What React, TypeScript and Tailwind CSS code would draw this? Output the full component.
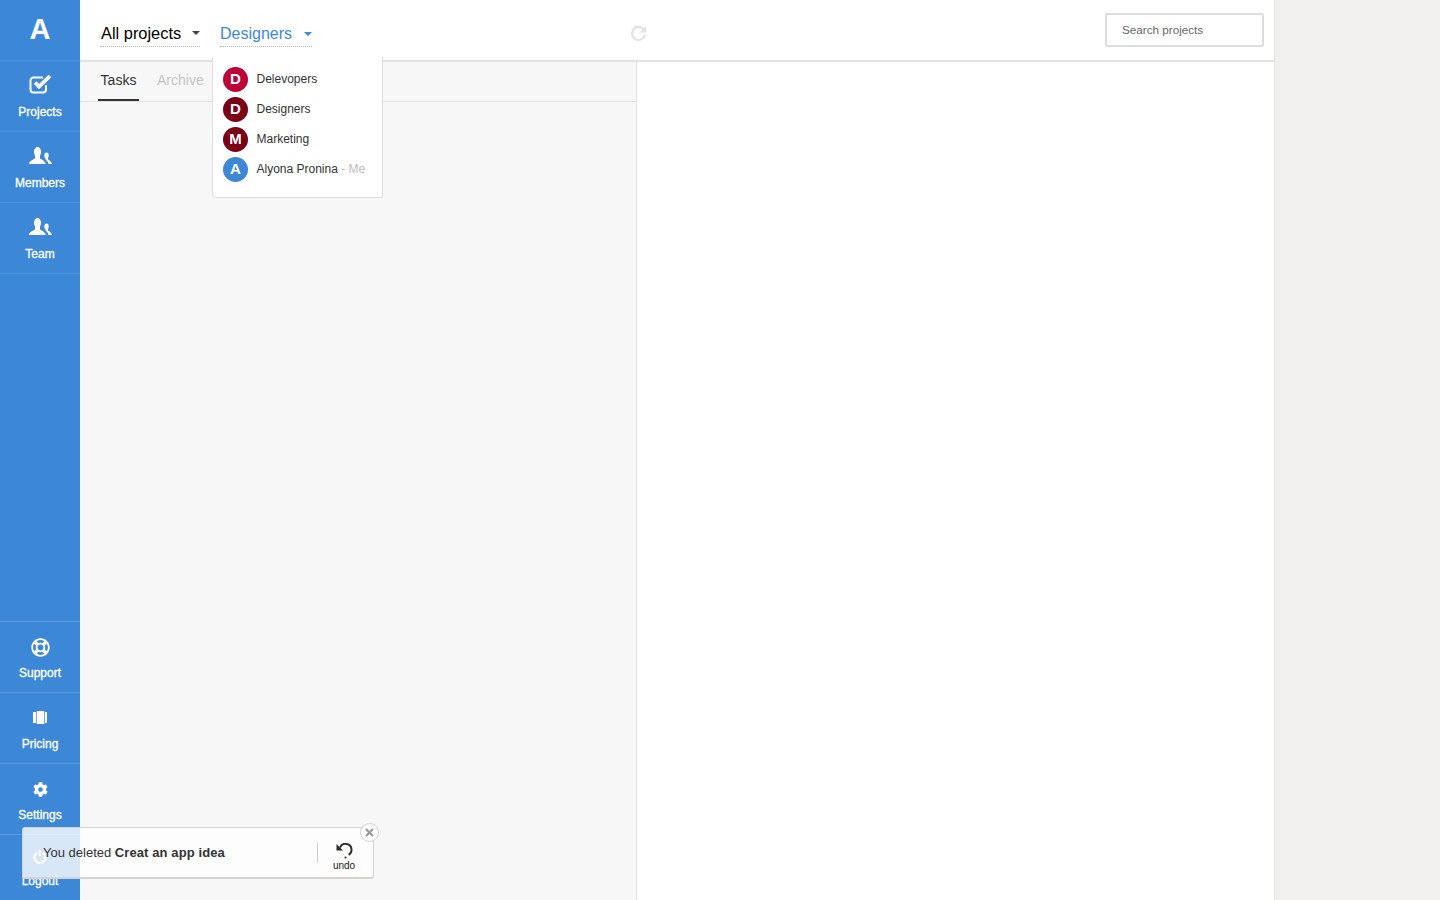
import type { ReactNode } from "react";
import { FaCog, FaRegLifeRing } from "react-icons/fa";

const groups = [
  { letter: "D", name: "Delevopers", color: "bg-[#bd0038]" },
  { letter: "D", name: "Designers", color: "bg-[#7a0018]" },
  { letter: "M", name: "Marketing", color: "bg-[#7a0018]" },
  { letter: "A", name: "Alyona Pronina", color: "bg-[#3d88d6]", me: true },
];

function CheckIcon() {
  return (
    <svg width="23" height="20" viewBox="0 0 23 20" fill="none" className="-mt-[3px]">
      <path d="M17 11v4.500a3 3 0 0 1-3 3H4.500a3 3 0 0 1-3-3V6.500a3 3 0 0 1 3-3H14" stroke="white" strokeWidth="2" />
      <path d="M6 8.500 10 12.500 21 2" stroke="white" strokeWidth="3.800" />
    </svg>
  );
}

function PeopleIcon() {
  return (
    <svg width="23" height="17" viewBox="0 0 23 17" fill="white" className="-mt-[3px]">
      <ellipse cx="8.500" cy="5" rx="3.500" ry="5" />
      <path d="M0 17C0 14.500 3 13 6 11.500V8h5v3.500c3 1.500 5.500 3 5.700 5.500Z" />
      <ellipse cx="17.500" cy="8.500" rx="2.200" ry="3" />
      <path d="M16.500 10.500H19v2c2 1 3.500 2.500 4 4.500h-3.500c-.4-2-1.300-3.300-3-4.500Z" />
    </svg>
  );
}

function PricingIcon() {
  return (
    <svg width="14" height="13" viewBox="0 0 14 13" fill="white">
      <rect x="0" y="1" width="3" height="11" />
      <rect x="3.700" y="0" width="7.600" height="13" />
      <rect x="12" y="1" width="2" height="11" />
    </svg>
  );
}

function PowerIcon() {
  return (
    <svg width="14" height="14" viewBox="0 0 14 14" fill="none" stroke="white" strokeWidth="2.200">
      <path d="M4 2.800a5.500 5.500 0 1 0 6 0" />
      <path d="M7 0v6" />
    </svg>
  );
}

function UndoIcon() {
  return (
    <svg width="17" height="16" viewBox="0 0 17 16" fill="none" className="shrink-0">
      <path d="M4 4.500A6 6 0 0 1 15.500 7c0 2.300-1 3.800-2.800 4.800" stroke="#2f2f2f" strokeWidth="2" />
      <path d="M.5 1v6.500H7Z" fill="#2f2f2f" />
      <circle cx="9.500" cy="14.500" r="1.100" fill="#2f2f2f" />
    </svg>
  );
}

function RefreshIcon() {
  return (
    <svg width="17" height="17" viewBox="0 0 17 17" fill="none">
      <path d="M13.500 4.200A6.500 6.500 0 1 0 15 9.500" stroke="#e3e3e3" strokeWidth="2.200" />
      <path d="M16 1v6.500H9.500Z" fill="#e3e3e3" />
    </svg>
  );
}

function Caret({ color }: { color: string }) {
  return <span className={`h-0 w-0 border-x-4 border-t-[4px] border-x-transparent ${color}`} />;
}

function NavLabel({ children }: { children: ReactNode }) {
  return <span className="text-xs leading-[20px] text-white [-webkit-text-stroke:0.3px_white]">{children}</span>;
}

function NavItem({ icon, label, faint = false }: { icon: ReactNode; label: string; faint?: boolean }) {
  return (
    <a className={`flex h-[71px] flex-col items-center gap-[5px] border-t pt-[13px] ${faint ? "border-[#4a90da]" : "border-[#5a9ade]"}`}>
      <span className="flex h-[23px] items-center justify-center">{icon}</span>
      <NavLabel>{label}</NavLabel>
    </a>
  );
}

export default function App() {
  return (
    <div className="relative flex h-[900px] overflow-hidden bg-[#f1f0ee] font-['Liberation_Sans',Arial,sans-serif]">
      <aside className="flex h-full w-[80px] flex-col bg-[#3d88d6]">
        <div className="flex h-[60px] items-center justify-center text-[29px] font-bold text-white">A</div>
        <NavItem faint icon={<CheckIcon />} label="Projects" />
        <NavItem faint icon={<PeopleIcon />} label="Members" />
        <NavItem faint icon={<PeopleIcon />} label="Team" />
        <div className="flex-1 border-t border-[#4a90da]" />
        <NavItem icon={<FaRegLifeRing className="mt-[2px] text-[19px] text-white" />} label="Support" />
        <NavItem icon={<PricingIcon />} label="Pricing" />
        <NavItem icon={<FaCog className="mt-[2px] text-[15px] text-white" />} label="Settings" />
        <a className="flex h-[66px] flex-col items-center gap-[7px] border-t border-[#5a9ade] pt-[15px]">
          <PowerIcon />
          <NavLabel>Logout</NavLabel>
        </a>
      </aside>

      <main className="flex h-full w-[1195px] flex-col border-r border-[#e2e2e2] bg-white">
        <header className="flex h-[62px] items-center justify-between border-b-2 border-[#e2e2e2] pr-[10px] pl-5">
          <div className="flex h-full w-[547px] items-center pt-[5px]">
            <button className="flex h-7 w-[100px] items-center justify-between border-b border-dotted border-[#bbbbbb] pt-[2px] pl-px text-[16.4px] text-black">
              All projects
              <Caret color="border-t-[#444444]" />
            </button>
            <button className="ml-5 flex h-7 w-[92px] items-center justify-between border-b border-dotted border-[#bbbbbb] pt-1 text-base text-[#3d88d6]">
              Designers
              <Caret color="border-t-[#3d88d6]" />
            </button>
            <span className="ml-auto pt-px">
              <RefreshIcon />
            </span>
          </div>
          <input
            placeholder="Search projects"
            className="h-[34px] w-[159px] rounded-[2px] border-2 border-[#dddddd] bg-white pb-[2px] pl-[15px] text-[11.7px] placeholder:text-[#666666]"
          />
        </header>
        <div className="flex min-h-0 flex-1">
          <section className="w-[557px] border-r border-[#e2e2e2] bg-[#f7f7f7]">
            <nav className="flex h-[40px] items-start gap-[18px] border-b border-[#e2e2e2] pl-[18px]">
              <span className="h-[39px] w-[41px] border-b-2 border-[#333333] pt-2 text-center text-sm leading-5 text-[#333333]">Tasks</span>
              <span className="pt-2 text-sm leading-5 text-[#c4c4c4]">Archive</span>
            </nav>
          </section>
          <section className="flex-1 bg-white" />
        </div>
      </main>

      <div className="absolute top-[57px] left-[212px] h-[141px] w-[171px] rounded-b-[3px] border border-t-0 border-[#dddddd] bg-white px-[10px] pt-[7px]">
        {groups.map((group) => (
          <div key={group.name} className="flex h-[30px] items-center gap-[8.5px]">
            <span className={`flex h-[25px] w-[25px] items-center justify-center rounded-full text-[15px] font-bold text-white ${group.color}`}>
              {group.letter}
            </span>
            <span className="text-xs text-[#333333]">
              {group.name}
              {group.me && <span className="text-[#bbbbbb]"> - Me</span>}
            </span>
          </div>
        ))}
      </div>

      <div className="absolute top-[827px] left-[22px] flex h-[52px] w-[352px] items-center rounded-[3px] border border-b-2 border-[#d5d2d2] bg-white/80 pl-5">
        <p className="flex-1 text-[13px] text-[#333333]">
          You deleted <b className="tracking-[0.1px]">Creat an app idea</b>
        </p>
        <span className="h-[19px] w-px bg-[#cccccc]" />
        <div className="mr-[3px] flex w-[52px] flex-col items-center pt-[9px]">
          <UndoIcon />
          <span className="mt-px text-[10px] leading-3 text-[#222222]">undo</span>
        </div>
        <span className="absolute -top-[5px] -right-[6px] flex h-[19px] w-[19px] items-center justify-center rounded-full border border-[#d5d2d2] bg-white">
          <svg width="9" height="9" viewBox="0 0 9 9" stroke="#999999" strokeWidth="2.200">
            <path d="M1 1 8 8M8 1 1 8" />
          </svg>
        </span>
      </div>
    </div>
  );
}
